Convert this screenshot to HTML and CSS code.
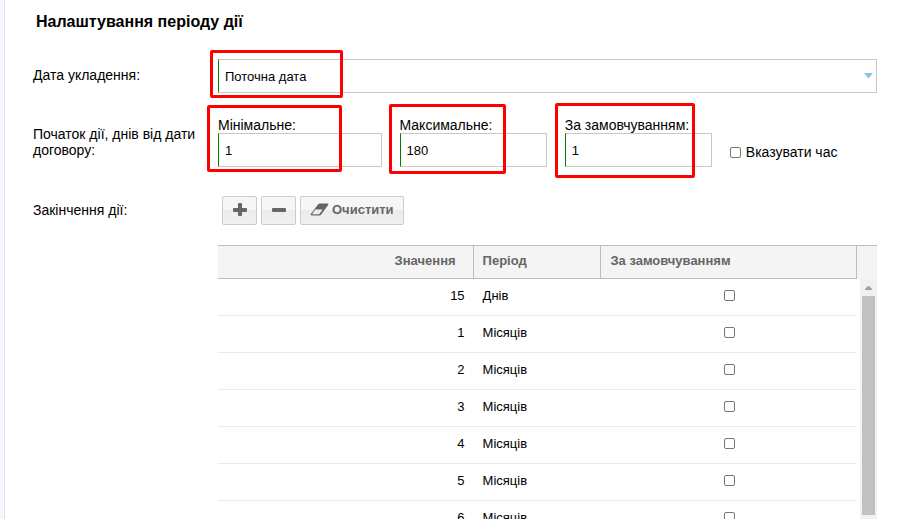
FILE: index.html
```html
<!DOCTYPE html>
<html lang="uk">
<head>
<meta charset="utf-8">
<title>Налаштування періоду дії</title>
<link rel="stylesheet" href="styles.css">
</head>
<body>
<main class="panel">
  <h1 class="title">Налаштування періоду дії</h1>
  <form class="form">
    <label class="caption" for="date">Дата укладення:</label>
    <div class="field select-field">
      <select class="control" id="date"><option>Поточна дата</option></select>
      <svg class="arrow" viewBox="0 0 9 5" aria-hidden="true"><path d="M0 0H9L5 5H4Z"/></svg>
      <span class="mark mark-date"></span>
    </div>

    <div class="caption caption-days">Початок дії, днів від дати договору:</div>
    <div class="days">
      <div class="field">
        <label class="field-label" for="min">Мінімальне:</label>
        <input class="control" id="min" type="text" value="1">
        <span class="mark mark-min"></span>
      </div>
      <div class="field">
        <label class="field-label" for="max">Максимальне:</label>
        <input class="control" id="max" type="text" value="180">
        <span class="mark mark-max"></span>
      </div>
      <div class="field">
        <label class="field-label" for="def">За замовчуванням:</label>
        <input class="control" id="def" type="text" value="1">
        <span class="mark mark-def"></span>
      </div>
      <label class="time"><input class="check" type="checkbox">Вказувати час</label>
    </div>

    <div class="caption">Закінчення дії:</div>
    <div class="toolbar">
      <button class="btn" type="button" aria-label="Додати"><svg width="14" height="14" viewBox="0 0 14 14"><path d="M5 1Q5 0 6 0H8Q9 0 9 1V5H13Q14 5 14 6V8Q14 9 13 9H9V12Q9 13 8 13H6Q5 13 5 12V9H1Q0 9 0 8V6Q0 5 1 5H5Z"/></svg></button>
      <button class="btn" type="button" aria-label="Видалити"><svg width="14" height="14" viewBox="0 0 14 14"><rect y="5" width="14" height="4" rx="1"/></svg></button>
      <button class="btn btn-text" type="button"><svg width="19" height="14" viewBox="0 0 19 14"><path fill-rule="evenodd" d="M8.400 1Q9 .5 9.800 .5H17.500Q18.800 .7 18.200 2L10.800 12Q10.200 12.500 9.400 12.500H1.500Q.2 12.200 .8 11ZM5.300 6.500L2 11.200H9.200L12.600 6.500Z"/></svg>Очистити</button>
    </div>
  </form>

  <div class="grid">
    <table class="table">
      <thead>
        <tr><th class="value">Значення</th><th class="period">Період</th><th class="default">За замовчуванням</th></tr>
      </thead>
      <tbody>
        <tr><td class="value">15</td><td>Днів</td><td class="default"><input class="check" type="checkbox" aria-label="За замовчуванням"></td></tr>
        <tr><td class="value">1</td><td>Місяців</td><td class="default"><input class="check" type="checkbox" aria-label="За замовчуванням"></td></tr>
        <tr><td class="value">2</td><td>Місяців</td><td class="default"><input class="check" type="checkbox" aria-label="За замовчуванням"></td></tr>
        <tr><td class="value">3</td><td>Місяців</td><td class="default"><input class="check" type="checkbox" aria-label="За замовчуванням"></td></tr>
        <tr><td class="value">4</td><td>Місяців</td><td class="default"><input class="check" type="checkbox" aria-label="За замовчуванням"></td></tr>
        <tr><td class="value">5</td><td>Місяців</td><td class="default"><input class="check" type="checkbox" aria-label="За замовчуванням"></td></tr>
        <tr><td class="value">6</td><td>Місяців</td><td class="default"><input class="check" type="checkbox" aria-label="За замовчуванням"></td></tr>
      </tbody>
    </table>
    <div class="gutter">
      <div class="gutter-head"></div>
      <div class="scrollbar">
        <svg class="scroll-up" width="7" height="4" viewBox="0 0 7 4" aria-hidden="true"><path d="M3 0H4L7 3V4H0V3Z"/></svg>
        <div class="thumb"></div>
      </div>
    </div>
  </div>
</main>
</body>
</html>
```

FILE: styles.css
```css
* {
  box-sizing: border-box;
}

body {
  margin: 0;
  height: 100vh;
  overflow: hidden;
  background: #f4f7fe;
  font: 14px/16px "Liberation Sans", Arial, sans-serif;
  color: #000;
}

.panel {
  min-height: 100vh;
  margin-left: 4px;
  padding: 12px 25px 0 28px;
  border-left: 1px solid #dde3f0;
  background: #fff;
}

.title {
  margin: 0 0 27px;
  padding-left: 3px;
  font-size: 16px;
  line-height: 20px;
}

.form {
  display: grid;
  grid-template-columns: 170px minmax(0, 1fr);
  column-gap: 15px;
  align-items: center;
}

.caption {
  padding-bottom: 2px;
}

.caption-days {
  padding-bottom: 6px;
}

.field {
  position: relative;
}

.field-label {
  display: block;
  white-space: nowrap;
}

.control {
  display: block;
  width: 100%;
  height: 34px;
  margin: 0;
  padding: 0 6px;
  border: 1px solid #c8c8c8;
  border-left-color: #008000;
  border-radius: 0;
  background: #fff;
  color: #000;
  font: 13px "Liberation Sans", Arial, sans-serif;
  appearance: none;
}

.arrow {
  position: absolute;
  top: 14px;
  right: 4px;
  width: 9px;
  height: 5px;
  fill: #8ec3e8;
}

.mark {
  position: absolute;
  z-index: 1;
  border: 3px solid #fe0000;
  border-radius: 2px;
  pointer-events: none;
}

.mark-date {
  top: -9px;
  left: -8px;
  width: 133px;
  height: 48px;
}

.mark-min {
  top: -12px;
  left: -11px;
  width: 135px;
  height: 67px;
}

.mark-max {
  top: -13px;
  left: -11px;
  width: 117px;
  height: 70px;
}

.mark-def {
  top: -14px;
  left: -10px;
  width: 140px;
  height: 75px;
}

.days {
  display: grid;
  grid-template-columns: minmax(0, 10fr) repeat(3, minmax(0, 9fr));
  column-gap: 18px;
  align-items: end;
  margin: 24px 0 29px;
}

.time {
  display: flex;
  align-items: center;
  gap: 5px;
  padding-bottom: 7px;
  white-space: nowrap;
}

.check {
  flex: none;
  width: 11px;
  height: 11px;
  margin: 0;
  border: 1px solid #767676;
  border-radius: 2px;
  background: #fff;
  appearance: none;
}

.toolbar {
  display: flex;
  gap: 4px;
  padding-left: 4px;
}

.btn {
  display: flex;
  align-items: center;
  justify-content: center;
  gap: 3px;
  width: 35px;
  height: 29px;
  padding: 0 0 2px;
  border: 1px solid #ccc;
  border-radius: 2px;
  background: linear-gradient(#f6f6f6 0 50%, #ececec 50%, #f1f1f1);
  color: #666;
  font: bold 13px "Liberation Sans", Arial, sans-serif;
}

.btn svg {
  fill: #666;
}

.btn-text {
  width: auto;
  padding: 0 9px 2px;
}

.grid {
  display: flex;
  margin: 20px 0 0 185px;
}

.table {
  flex: 1;
  table-layout: fixed;
  border-collapse: separate;
  border-spacing: 0;
  font-size: 13px;
}

.table th {
  height: 34px;
  padding: 0 9px 2px;
  border: 1px solid #bdbdbd;
  border-left: 0;
  background: #f4f4f4;
  color: #666;
  text-align: left;
}

.table th.value {
  width: 40%;
  padding-right: 17px;
  text-align: right;
}

.table th.period {
  width: 20%;
}

.table td {
  height: 37px;
  padding: 0 9px 2px;
  border-bottom: 1px solid #ebebeb;
}

.table td.value {
  text-align: right;
}

.table td.default {
  padding-bottom: 4px;
}

.table td .check {
  display: block;
  margin: 0 auto;
}

.gutter {
  display: flex;
  flex-direction: column;
  width: 20px;
}

.gutter-head {
  height: 34px;
  border-top: 1px solid #bdbdbd;
  background: #f4f4f4;
}

.scrollbar {
  display: flex;
  flex: 1;
  flex-direction: column;
  align-items: center;
  gap: 6px;
  margin-left: 3px;
  padding: 7px 2px 0;
  background: #f1f1f1;
}

.scroll-up {
  fill: #a0a0a0;
}

.thumb {
  width: 13px;
  height: 219px;
  background: #c1c1c1;
}
```
